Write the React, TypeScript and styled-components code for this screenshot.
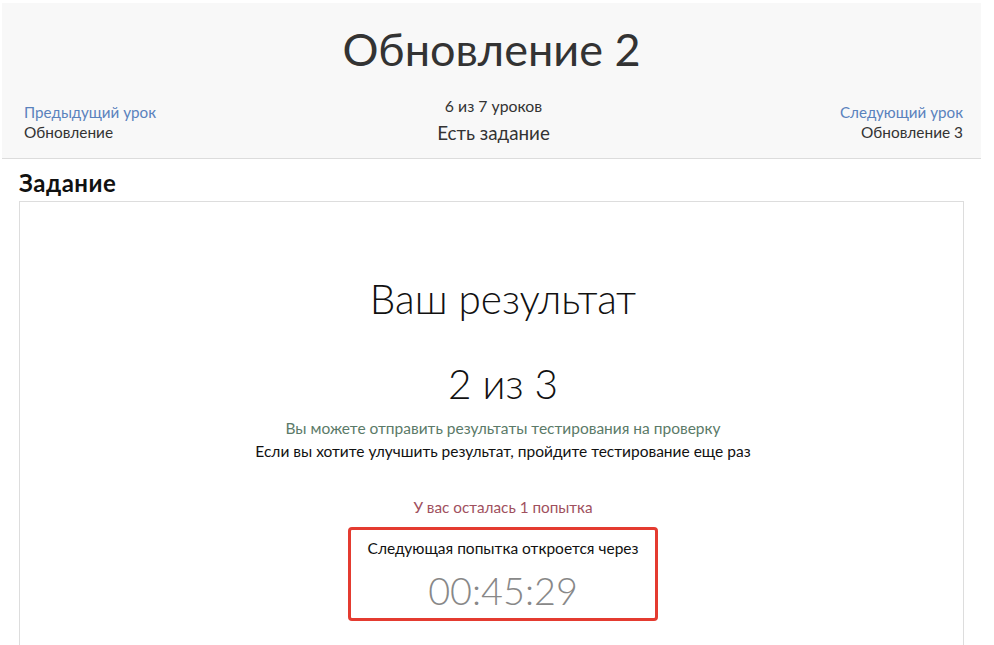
import React from "react";
import styled, { createGlobalStyle } from "styled-components";

const Global = createGlobalStyle`
  html, body { margin: 0; padding: 0; background: #fff; }
  body { font-family: "Lato", "Open Sans", sans-serif; color: #222; }
  * { box-sizing: border-box; }
`;

const Page = styled.div`
  padding: 3px 13px 0 2px;
`;

const Header = styled.header`
  background: #f8f8f8;
  border-bottom: 1px solid #dcdcdc;
  height: 156px;
  display: flex;
  flex-direction: column;
`;

const Title = styled.h1`
  margin: 0;
  padding-top: 21px;
  text-align: center;
  font-weight: 400;
  font-size: 45px;
  line-height: 50px;
  color: #333;
`;

const NavRow = styled.div`
  display: grid;
  grid-template-columns: 1fr auto 1fr;
  align-items: start;
  padding: 0 18px 0 22px;
  margin-top: 22px;
`;

const NavCol = styled.div<{ $align: "left" | "center" | "right" }>`
  display: flex;
  flex-direction: column;
  align-items: ${(p) =>
    p.$align === "left" ? "flex-start" : p.$align === "right" ? "flex-end" : "center"};
  text-align: ${(p) => p.$align};
  padding-top: ${(p) => (p.$align === "center" ? 0 : 6)}px;
`;

const NavLink = styled.a`
  font-size: 15.2px;
  line-height: 20px;
  color: #5a82bd;
  text-decoration: none;
`;

const NavName = styled.span`
  font-size: 15.4px;
  line-height: 20px;
  color: #333;
`;

const Count = styled.span`
  font-size: 15.8px;
  line-height: 20px;
  color: #333;
`;

const Task = styled.span`
  font-size: 18.8px;
  line-height: 26px;
  margin-top: 4px;
  color: #333;
`;

const Content = styled.main`
  padding: 0 17px;
`;

const SectionTitle = styled.h2`
  margin: 13px 0 7px;
  font-size: 24px;
  line-height: 22px;
  letter-spacing: 0.5px;
  font-weight: 700;
  color: #111;
`;

const Card = styled.section`
  border: 1px solid #ddd;
  border-bottom: none;
  min-height: 460px;
  display: flex;
  flex-direction: column;
  align-items: center;
  padding: 74px 0 0 23px;
`;

const BigText = styled.div<{ $color?: string; $mt?: number; $size?: number }>`
  font-size: ${(p) => p.$size ?? 40.5}px;
  font-weight: 300;
  line-height: ${(p) => (p.$size ? 44 : 50)}px;
  color: ${(p) => p.$color ?? "#111"};
  margin-top: ${(p) => p.$mt ?? 0}px;
`;

const Line = styled.div<{ $color: string; $mt?: number; $size?: number }>`
  font-size: ${(p) => p.$size ?? 15.4}px;
  line-height: 23px;
  color: ${(p) => p.$color};
  margin-top: ${(p) => p.$mt ?? 0}px;
`;

const TimerBox = styled.div`
  margin-top: 8px;
  width: 310px;
  height: 94px;
  border: 3px solid #e43b30;
  border-radius: 4px;
  display: flex;
  flex-direction: column;
  align-items: center;
  padding-top: 7px;
`;

export default function App() {
  return (
    <>
      <Global />
      <Page>
        <Header>
          <Title>Обновление 2</Title>
          <NavRow>
            <NavCol $align="left">
              <NavLink href="#">Предыдущий урок</NavLink>
              <NavName>Обновление</NavName>
            </NavCol>
            <NavCol $align="center">
              <Count>6 из 7 уроков</Count>
              <Task>Есть задание</Task>
            </NavCol>
            <NavCol $align="right">
              <NavLink href="#">Следующий урок</NavLink>
              <NavName>Обновление 3</NavName>
            </NavCol>
          </NavRow>
        </Header>
        <Content>
          <SectionTitle>Задание</SectionTitle>
          <Card>
            <BigText $mt={-2}>Ваш результат</BigText>
            <BigText $mt={35}>2 из 3</BigText>
            <Line $color="#5b7a68" $mt={8} $size={15.5}>
              Вы можете отправить результаты тестирования на проверку
            </Line>
            <Line $color="#111" $size={15.5}>
              Если вы хотите улучшить результат, пройдите тестирование еще раз
            </Line>
            <Line $color="#a0505e" $mt={33} $size={15.3}>
              У вас осталась 1 попытка
            </Line>
            <TimerBox>
              <Line $color="#111" $size={15.5}>Следующая попытка откроется через</Line>
              <BigText $color="#888" $mt={9} $size={37.8}>00:45:29</BigText>
            </TimerBox>
          </Card>
        </Content>
      </Page>
    </>
  );
}
